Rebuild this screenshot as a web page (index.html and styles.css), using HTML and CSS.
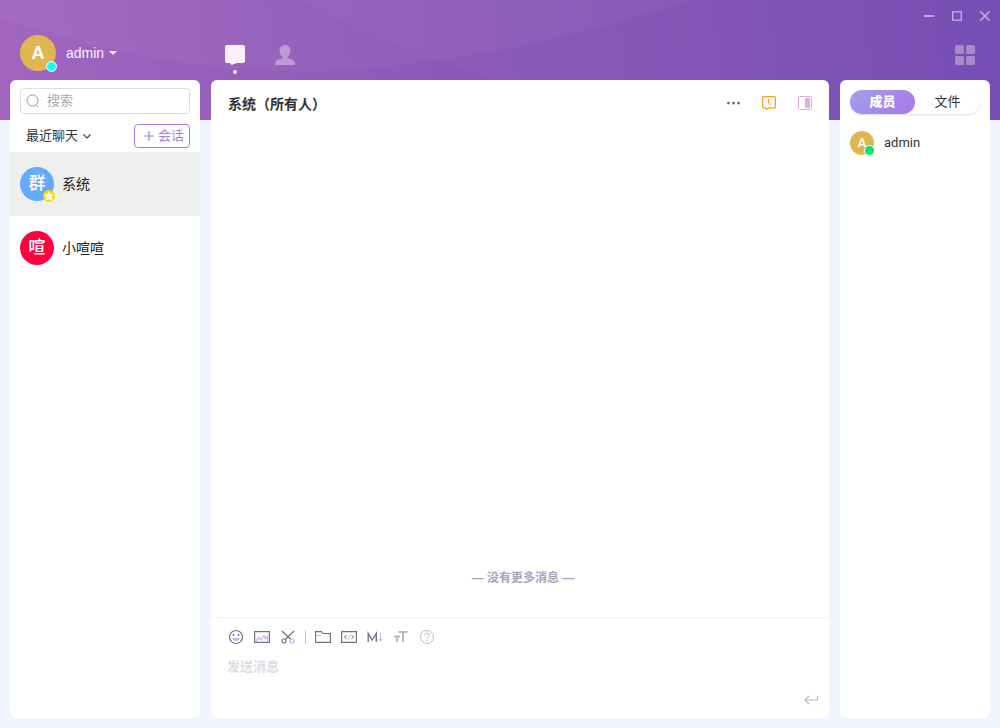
FILE: index.html
```html
<!DOCTYPE html>
<html lang="zh-CN">
<head>
<meta charset="utf-8">
<meta name="viewport" content="width=device-width, initial-scale=1">
<title>喧喧</title>
<link rel="stylesheet" href="styles.css">
</head>
<body>
<div class="app">
  <svg class="banner" viewBox="0 0 1000 120" preserveAspectRatio="none" aria-hidden="true">
    <defs>
      <linearGradient id="sky" gradientUnits="userSpaceOnUse" x1="0" y1="120" x2="1000" y2="0">
        <stop offset="0" stop-color="#a266bf"/>
        <stop offset=".45" stop-color="#8c58b8"/>
        <stop offset="1" stop-color="#724ab3"/>
      </linearGradient>
    </defs>
    <rect width="1000" height="120" fill="url(#sky)"/>
    <path d="M0 0V17C100 53 200 71 300 71C420 71 560 43 690 0Z" fill="#fff" fill-opacity=".035"/>
    <path d="M300 0C350 26 430 60 500 82Q570 104 650 120H1000V0Z" fill="#fff" fill-opacity=".025"/>
  </svg>

  <header class="header">
    <div class="titlebar">
      <button class="win-btn" type="button" aria-label="最小化"><svg width="10" height="10" viewBox="0 0 10 10"><path d="M0 5H10" stroke-width="2"/></svg></button>
      <button class="win-btn" type="button" aria-label="最大化"><svg width="10" height="10" viewBox="0 0 10 10"><path d="M.75 .75H9.250V9.250H.75Z" stroke-width="1.500"/></svg></button>
      <button class="win-btn" type="button" aria-label="关闭"><svg width="10" height="10" viewBox="0 0 10 10"><path d="M0 0L10 10M10 0L0 10" stroke-width="1.600"/></svg></button>
    </div>
    <div class="header-main">
      <button class="account" type="button">
        <span class="avatar avatar-lg gold">A<i class="status online"></i></span>
        <span>admin</span>
        <svg width="8" height="4" viewBox="0 0 8 4"><path d="M0 0H8L4 4Z" fill="#f8ecff"/></svg>
      </button>
      <nav class="nav">
        <button class="nav-btn active" type="button" aria-label="聊天">
          <svg width="20" height="20" viewBox="0 0 20 20"><path d="M2 0H18Q20 0 20 2V16Q20 18 18 18H12L6.500 20L5 18H2Q0 18 0 16V2Q0 0 2 0Z" fill="#fcf0ff"/></svg>
        </button>
        <button class="nav-btn" type="button" aria-label="联系人">
          <svg width="20" height="20" viewBox="0 0 20 20"><path d="M10 0C6.800 0 4.500 2.200 4.500 5.500C4.500 8.500 6 11 7.500 12.200V13.200C3 14 0 15.300 0 18.500V20H20V18.500C20 15.300 17 14 12.500 13.200V12.200C14 11 15.500 8.500 15.500 5.500C15.500 2.200 13.200 0 10 0Z" fill="#bd9ad5"/></svg>
        </button>
      </nav>
      <button class="nav-btn" type="button" aria-label="应用">
        <svg width="20" height="20" viewBox="0 0 20 20" fill="#aa8aca"><rect width="9" height="9" rx="1.500"/><rect x="11" width="9" height="9" rx="1.500"/><rect y="11" width="9" height="9" rx="1.500"/><rect x="11" y="11" width="9" height="9" rx="1.500"/></svg>
      </button>
    </div>
  </header>

  <div class="panels">
    <aside class="panel chats">
      <label class="search">
        <svg width="14" height="14" viewBox="0 0 14 14" fill="none" stroke="#96969e" stroke-width="1"><circle cx="6.500" cy="6.500" r="5.500"/><path d="M10.500 11L12.700 13"/></svg>
        <input type="text" placeholder="搜索" aria-label="搜索">
      </label>
      <div class="chats-bar">
        <button class="sort" type="button">最近聊天
          <svg width="8" height="5" viewBox="0 0 8 5" fill="none" stroke="#444" stroke-width="1.200"><path d="M.5 .5L4 4L7.500 .5"/></svg>
        </button>
        <button class="create" type="button">
          <svg width="10" height="10" viewBox="0 0 10 10" stroke="#a87be6" stroke-width="1.200"><path d="M5 0V10M0 5H10"/></svg>会话
        </button>
      </div>
      <ul class="chat-list">
        <li><button class="chat selected" type="button">
          <span class="avatar avatar-md blue">群<i class="star"><svg width="10" height="10" viewBox="0 0 10 10"><path d="M5 .8L6.400 3.400L9.300 3.900L7.300 6L7.700 9L5 7.800L2.300 9L2.700 6L.7 3.900L3.600 3.400Z" fill="#fff" stroke="#fff" stroke-width=".6" stroke-linejoin="round"/></svg></i></span>
          <span>系统</span>
        </button></li>
        <li><button class="chat" type="button">
          <span class="avatar avatar-md red">喧</span>
          <span>小喧喧</span>
        </button></li>
      </ul>
    </aside>

    <main class="panel talk">
      <div class="talk-head">
        <h1>系统（所有人）</h1>
        <div class="talk-tools">
          <button class="icon-btn" type="button" aria-label="更多"><svg width="14" height="4" viewBox="0 0 14 4" fill="#7d7788"><circle cx="2.500" cy="2" r="1.500"/><circle cx="7.500" cy="2" r="1.500"/><circle cx="12.500" cy="2" r="1.500"/></svg></button>
          <button class="icon-btn" type="button" aria-label="聊天记录"><svg width="14" height="14" viewBox="0 0 14 14" fill="none" stroke="#f9a01b"><path d="M1.500 .6H12.500Q13.400 .6 13.400 1.500V11Q13.400 11.900 12.500 11.900H7.500L4.500 13.400L3.500 11.900H1.500Q.6 11.900 .6 11V1.500Q.6 .6 1.500 .6Z" stroke-width="1.200"/><path d="M6.500 3V6.500L8.700 8.700" stroke-width="1.200"/></svg></button>
          <button class="icon-btn" type="button" aria-label="侧边栏"><svg width="14" height="14" viewBox="0 0 14 14"><rect x=".5" y=".5" width="13" height="13" rx="1" fill="none" stroke="#e2aadb"/><rect x="7" y="2" width="5" height="10" rx="1" fill="#deb0d9"/></svg></button>
        </div>
      </div>
      <div class="messages"><p>— 没有更多消息 —</p></div>
      <div class="composer">
        <div class="tools">
          <button class="tool" type="button" aria-label="表情"><svg width="16" height="16" viewBox="0 0 16 16"><circle cx="8" cy="8" r="6.500" fill="none" stroke="#777283" stroke-width="1.200"/><circle cx="5.500" cy="6" r="1" fill="#777283"/><circle cx="10.500" cy="6" r="1" fill="#777283"/><path d="M4.500 9H11.500Q11 12 8 12T4.500 9Z" fill="#d2a8f0"/></svg></button>
          <button class="tool" type="button" aria-label="图片"><svg width="16" height="16" viewBox="0 0 16 16" fill="none"><path d="M.6 2.600H15.400V13.400H.6Z" stroke="#777283" stroke-width="1.200"/><path d="M2 12L5 8.500L7 11L10 6.500L11.500 9.500L13.500 7.500V12" stroke="#d2a8f0" stroke-width="1.200"/></svg></button>
          <button class="tool" type="button" aria-label="截图"><svg width="16" height="16" viewBox="0 0 16 16" fill="none" stroke="#777283" stroke-width="1.200"><path d="M2 2L11 10.500M14 2L5 10.500"/><circle cx="4" cy="12" r="2"/><circle cx="12" cy="12" r="2" stroke="#d2a8f0"/></svg></button>
          <span class="divider"></span>
          <button class="tool" type="button" aria-label="文件"><svg width="16" height="16" viewBox="0 0 16 16" fill="none"><path d="M.6 13.400V2.600H6.500L8 4.500H15.400V13.400Z" stroke="#777283" stroke-width="1.200"/><path d="M1.500 6.500H6" stroke="#d2a8f0"/></svg></button>
          <button class="tool" type="button" aria-label="代码"><svg width="16" height="16" viewBox="0 0 16 16" fill="none"><path d="M.6 2.600H15.400V13.400H.6Z" stroke="#777283" stroke-width="1.200"/><path d="M5.500 6L3.500 8L5.500 10M10.500 6L12.500 8L10.500 10" stroke="#777283"/><path d="M9 5.500L7 10.500" stroke="#d2a8f0"/></svg></button>
          <button class="tool" type="button" aria-label="Markdown"><svg width="16" height="16" viewBox="0 0 16 16" fill="none"><path d="M1.200 13V4.500L5.200 11L9.300 4.500V13" stroke="#777283" stroke-width="1.400"/><path d="M13.500 4V12M11.800 10L13.500 12L15.200 10" stroke="#d2a8f0"/></svg></button>
          <button class="tool" type="button" aria-label="字体"><svg width="16" height="16" viewBox="0 0 16 16" fill="none" stroke="#bcb9c7" stroke-width="2"><path d="M5.500 3H14.500M10 3V13M1 7.500H7M4 7.500V13"/></svg></button>
          <button class="tool" type="button" aria-label="帮助"><svg width="16" height="16" viewBox="0 0 16 16" fill="none" stroke="#c0b9cc"><circle cx="8" cy="8" r="6.500"/><path d="M5.700 6.300Q5.900 4.300 8 4.300T10.300 6.200Q10.200 7.200 9 7.900Q8 8.500 8 9.800M8 10.800V12"/></svg></button>
        </div>
        <textarea class="entry" placeholder="发送消息" aria-label="发送消息"></textarea>
        <button class="send" type="button" aria-label="发送"><svg width="14" height="10" viewBox="0 0 14 10" fill="none" stroke="#bbb" stroke-width="1.200"><path d="M13.400 1V5H1M5 1L1 5L5 9"/></svg></button>
      </div>
    </main>

    <aside class="panel side">
      <div class="tabs" role="tablist">
        <button class="tab current" type="button" role="tab" aria-selected="true">成员</button>
        <button class="tab" type="button" role="tab" aria-selected="false">文件</button>
      </div>
      <button class="member" type="button">
        <span class="avatar avatar-sm gold">A<i class="status green"></i></span>
        <span>admin</span>
      </button>
    </aside>
  </div>
</div>
</body>
</html>
```

FILE: styles.css
```css
* { box-sizing: border-box; }

body {
  margin: 0;
  background: #f1f5ff;
  color: #333;
  font-family: Roboto, "Noto Sans CJK SC", sans-serif;
  font-size: 13px;
  line-height: 20px;
}

button {
  display: flex;
  align-items: center;
  margin: 0;
  padding: 0;
  border: 0;
  background: none;
  color: inherit;
  font: inherit;
  cursor: pointer;
}

svg { display: block; flex: none; }

.app {
  position: relative;
  display: flex;
  flex-direction: column;
  min-height: 100vh;
}

.banner {
  position: absolute;
  top: 0;
  left: 0;
  width: 100%;
  height: 120px;
}

.header, .panels { position: relative; }

.titlebar {
  display: flex;
  justify-content: flex-end;
  height: 32px;
  padding-right: 1px;
}

.win-btn {
  justify-content: center;
  width: 28px;
}

.win-btn svg { fill: none; stroke: #c1a6df; }

.header-main {
  display: flex;
  height: 48px;
  padding: 0 10px;
}

.account {
  align-self: flex-start;
  gap: 10px;
  width: 200px;
  height: 42px;
  padding-left: 10px;
  color: #fbf1ff;
  font-family: "Liberation Sans", sans-serif;
  font-size: 14px;
}

.account svg { margin-left: -5px; }

.nav { display: flex; flex: 1; }

.nav-btn {
  position: relative;
  justify-content: center;
  width: 50px;
  height: 46px;
}

.nav-btn.active::after {
  content: "";
  position: absolute;
  left: 23px;
  bottom: 4px;
  width: 4px;
  height: 4px;
  border-radius: 50%;
  background: #fcf0ff;
}

.avatar {
  position: relative;
  display: flex;
  flex: none;
  align-items: center;
  justify-content: center;
  border-radius: 50%;
  color: #fff;
  font-weight: 500;
}

.avatar-lg { width: 36px; height: 36px; font-size: 18px; font-weight: 700; }
.avatar-md { width: 34px; height: 34px; padding-bottom: 2px; font-size: 17px; }
.avatar-sm { width: 24px; height: 24px; font-size: 13px; }

.gold { background: #e0b650; }
.blue { background: #64aaff; }
.red { background: #ff0040; }

.status {
  position: absolute;
  right: -1px;
  bottom: -1px;
  width: 11px;
  height: 11px;
  border: 1px solid #fff;
  border-radius: 50%;
}

.status.online { background: #18ffff; }
.status.green { background: #00e676; }

.star {
  position: absolute;
  right: -1px;
  bottom: -1px;
  display: flex;
  align-items: center;
  justify-content: center;
  width: 12px;
  height: 12px;
  border-radius: 50%;
  background: #ffd600;
}

.panels {
  display: grid;
  flex: 1;
  grid-template-columns: 190px 1fr 150px;
  gap: 11px;
  padding: 0 10px 10px;
}

.panel {
  display: flex;
  flex-direction: column;
  min-width: 0;
  border-radius: 6px;
  background: #fff;
}

.search {
  display: flex;
  align-items: center;
  gap: 7px;
  height: 26px;
  margin: 8px 10px 0;
  padding: 0 5px;
  border: 1px solid #dcdce2;
  border-radius: 4px;
}

.search input {
  flex: 1;
  min-width: 0;
  padding: 0;
  border: 0;
  outline: 0;
  background: none;
  font: inherit;
}

.search input::placeholder { color: #aaa; }

.chats-bar {
  display: flex;
  align-items: center;
  justify-content: space-between;
  height: 38px;
  padding: 6px 10px 0 16px;
}

.sort { gap: 5px; }

.create {
  gap: 4px;
  height: 24px;
  padding: 0 5px 0 9px;
  border: 1px solid #a87be6;
  border-radius: 4px;
  color: #a87be6;
}

.chat-list {
  margin: 0;
  padding: 0;
  list-style: none;
}

.chat {
  gap: 8px;
  width: 100%;
  height: 64px;
  padding: 0 10px;
  color: #222;
  font-size: 14px;
}

.chat.selected { background: #efefef; }

.talk-head {
  display: flex;
  align-items: center;
  justify-content: space-between;
  height: 48px;
  padding: 0 6px 0 17px;
}

.talk-head h1 {
  margin: 0;
  font-size: 14px;
  font-weight: 700;
}

.talk-tools { display: flex; }

.icon-btn {
  justify-content: center;
  width: 36px;
  height: 36px;
}

.icon-btn svg { margin-top: -2px; }

.messages {
  display: flex;
  flex: 1;
  flex-direction: column;
  justify-content: flex-end;
  padding-bottom: 29px;
}

.messages p {
  margin: 0;
  padding-left: 6px;
  color: #a7a2bd;
  font-family: "Liberation Sans", "Noto Sans CJK SC", sans-serif;
  font-size: 12px;
  font-weight: 700;
  text-align: center;
}

.composer {
  display: flex;
  flex-direction: column;
  border-top: 1px solid #ebf2f9;
}

.tools {
  display: flex;
  align-items: center;
  height: 38px;
  padding: 0 12px;
}

.tool {
  justify-content: center;
  width: 26px;
  height: 26px;
}

.divider {
  width: 1px;
  height: 14px;
  margin: 0 4px;
  background: #d2bbe6;
}

.entry {
  height: 30px;
  padding: 1px 16px;
  border: 0;
  outline: 0;
  background: none;
  font: inherit;
  font-weight: 700;
  resize: none;
}

.entry::placeholder { color: #d9dee4; }

.send {
  align-self: flex-end;
  justify-content: center;
  width: 36px;
  height: 28px;
  margin-bottom: 4px;
}

.tabs {
  display: flex;
  margin: 10px 10px 0;
  border-radius: 12px;
  box-shadow: 0 1px 2px rgba(0, 0, 0, .14);
}

.tab {
  flex: 1;
  justify-content: center;
  height: 24px;
  border-radius: 12px;
}

.tab.current {
  background: linear-gradient(135deg, #a3a0ea, #a778e6);
  color: #fff;
  font-weight: 900;
}

.member {
  gap: 10px;
  margin: 17px 10px 0;
}
```
